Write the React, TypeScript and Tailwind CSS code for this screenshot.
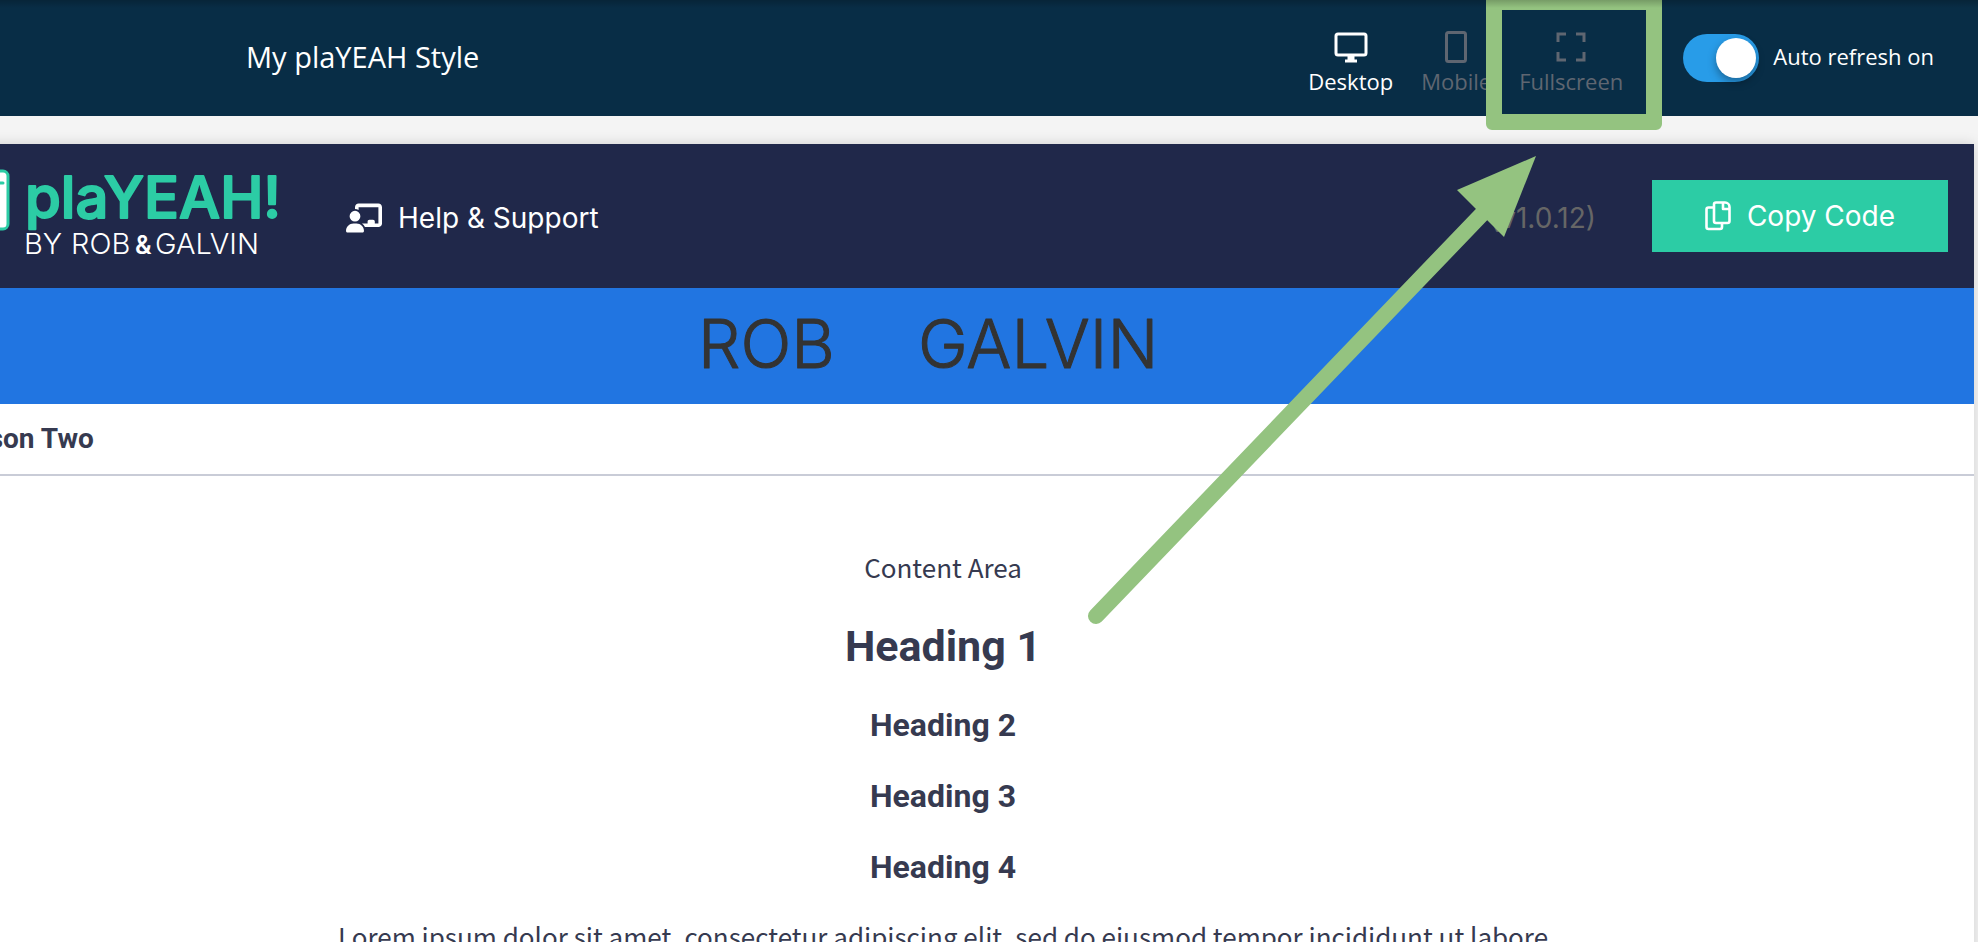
import type { ReactNode } from "react";
import { FaChalkboardUser } from "react-icons/fa6";

function ViewButton({ label, active, children }: { label: string; active?: boolean; children: ReactNode }) {
  return (
    <button
      type="button"
      className={
        active
          ? "flex flex-col items-center gap-0.5 text-[22px] leading-[30px] text-white"
          : "flex flex-col items-center gap-0.5 text-[22px] leading-[30px] text-[#5f6671]"
      }
    >
      <svg width="34" height="38" viewBox="0 0 34 38" fill="none" stroke="currentColor" aria-hidden="true">
        {children}
      </svg>
      {label}
    </button>
  );
}

function TopBar() {
  return (
    <header className="relative flex h-[116px] items-center justify-between bg-[#082d46] pr-11 pl-[246px] font-['Open_Sans',sans-serif]">
      <h1 className="pb-0.5 text-[29px] leading-10 text-white">My plaYEAH Style</h1>
      <div className="flex items-center">
        <nav aria-label="Preview size" className="flex gap-7 pt-1.5">
          <ViewButton label="Desktop" active>
            <rect x="2" y="8" width="30" height="21" rx="2" strokeWidth="3" />
            <path d="M17 29v6" strokeWidth="7" />
            <path d="M11 35h12" strokeWidth="3" />
          </ViewButton>
          <ViewButton label="Mobile">
            <rect x="7.5" y="6.5" width="19" height="29" rx="2" strokeWidth="3" />
          </ViewButton>
          <ViewButton label="Fullscreen">
            <path d="M4 16V8h8M22 8h8v8M30 26v8h-8M12 34H4v-8" strokeWidth="3" />
          </ViewButton>
        </nav>
        <label className="ml-[60px] flex items-center gap-[14px] text-[22px] leading-[30px] text-white">
          <input type="checkbox" role="switch" defaultChecked className="peer sr-only" />
          <span className="flex h-12 w-[76px] items-center justify-end rounded-full bg-[#289ce8] pr-[3px]">
            <span className="size-10 rounded-full bg-white shadow-[0_4px_8px_rgba(0,0,0,0.35)]" />
          </span>
          <span className="pb-1">Auto refresh on</span>
        </label>
      </div>
      <div className="pointer-events-none absolute top-0 right-[316px] h-[130px] w-44 rounded-b-md border-16 border-t-10 border-[#94c380]" />
      <div className="pointer-events-none absolute inset-x-0 top-0 h-2 bg-linear-to-b from-black/20 to-transparent" />
    </header>
  );
}

function Logo() {
  return (
    <svg
      width="330"
      height="96"
      viewBox="0 0 330 96"
      role="img"
      aria-label="plaYEAH! by Rob & Galvin"
      className="font-['Inter',sans-serif]"
      strokeLinejoin="round"
    >
      <rect x="2" y="3" width="52" height="58" rx="5" fill="#fff" stroke="#2ccca5" strokeWidth="3" />
      <path d="M40 15H49" stroke="#2ccca5" strokeWidth="3" strokeLinecap="round" />
      <text x="71" y="50" className="text-[58px] font-medium" fill="#2ccca5" stroke="#2ccca5" strokeWidth="2">
        plaYEAH!
      </text>
      <g className="text-[29px] font-light" fill="#fff">
        <text x="70" y="86">BY</text>
        <text x="117" y="86">ROB</text>
        <text x="181" y="86" className="text-[25px] font-semibold">&amp;</text>
        <text x="201" y="86">GALVIN</text>
      </g>
    </svg>
  );
}

function CopyIcon() {
  return (
    <svg width="26" height="30" viewBox="0 0 26 30" fill="none" stroke="#fff" strokeWidth="2.6" strokeLinejoin="round" aria-hidden="true">
      <path d="M11 1.500h9a4.500 4.500 0 0 1 4.500 4.500V20a2 2 0 0 1-2 2H11a2 2 0 0 1-2-2V3.500a2 2 0 0 1 2-2Z" />
      <path d="M18 1.500V8h6.500" />
      <path d="M9 6.500H3.500a2 2 0 0 0-2 2V26a2 2 0 0 0 2 2H15a2 2 0 0 0 2-2v-4" />
    </svg>
  );
}

function PreviewBar() {
  return (
    <div className="flex h-36 items-center justify-between bg-[#20284a] pr-[26px] pl-[42px] font-['Inter',sans-serif] text-[28px] leading-9">
      <div className="flex items-center gap-[62px]">
        <Logo />
        <a href="#help" className="flex items-center gap-4 pt-1 text-white">
          <FaChalkboardUser className="size-9" aria-hidden="true" />
          Help &amp; Support
        </a>
      </div>
      <div className="flex items-center gap-14">
        <span className="pt-1 text-[#666]">(v1.0.12)</span>
        <button type="button" className="flex h-[72px] w-[296px] items-center justify-center gap-4 bg-[#2ccca5] text-white">
          <CopyIcon />
          Copy Code
        </button>
      </div>
    </div>
  );
}

function Banner() {
  return (
    <div className="flex h-[116px] items-center justify-center bg-[#2175e1] pr-5">
      <svg
        width="480"
        height="96"
        viewBox="0 0 480 96"
        role="img"
        aria-label="Rob Galvin"
        className="font-['Inter',sans-serif] text-[67px] font-light"
        fill="#333"
        stroke="#333"
        strokeWidth="1"
        strokeLinejoin="round"
      >
        <text x="5" y="70">ROB</text>
        <text x="225" y="70">GALVIN</text>
      </svg>
    </div>
  );
}

function Pointer() {
  return (
    <svg className="pointer-events-none absolute top-[150px] right-[430px]" width="470" height="480" viewBox="0 0 470 480" aria-hidden="true">
      <path d="M18 466L406 62" stroke="#94c380" strokeWidth="16" strokeLinecap="round" />
      <path d="M458 6L379 40L426 87Z" fill="#94c380" />
    </svg>
  );
}

export default function App() {
  return (
    <div className="relative h-screen overflow-hidden bg-[#f4f4f4]">
      <TopBar />
      <main className="mt-7 mr-1 -ml-[88px] bg-white text-[#363a50] shadow-[0_0_12px_rgba(0,0,0,0.15)]">
        <PreviewBar />
        <Banner />
        <div className="flex h-[72px] items-center border-b-2 border-[#c9ccd7] px-8 font-['Roboto',sans-serif] text-[28px] leading-9 font-bold">
          Lesson Two
        </div>
        <section className="flex flex-col gap-[31px] py-[71px] text-center font-['Roboto',sans-serif] text-[32px] leading-10 font-bold">
          <p className="font-['Noto_Sans_CJK_SC',sans-serif] text-[26px] font-normal">Content Area</p>
          <h1 className="text-[43px] leading-14">Heading 1</h1>
          <h2>Heading 2</h2>
          <h3>Heading 3</h3>
          <h4>Heading 4</h4>
          <p className="font-['Noto_Sans_CJK_SC',sans-serif] text-[26px] leading-9 font-normal">
            Lorem ipsum dolor sit amet, consectetur adipiscing elit, sed do eiusmod tempor incididunt ut labore
          </p>
        </section>
      </main>
      <Pointer />
    </div>
  );
}
